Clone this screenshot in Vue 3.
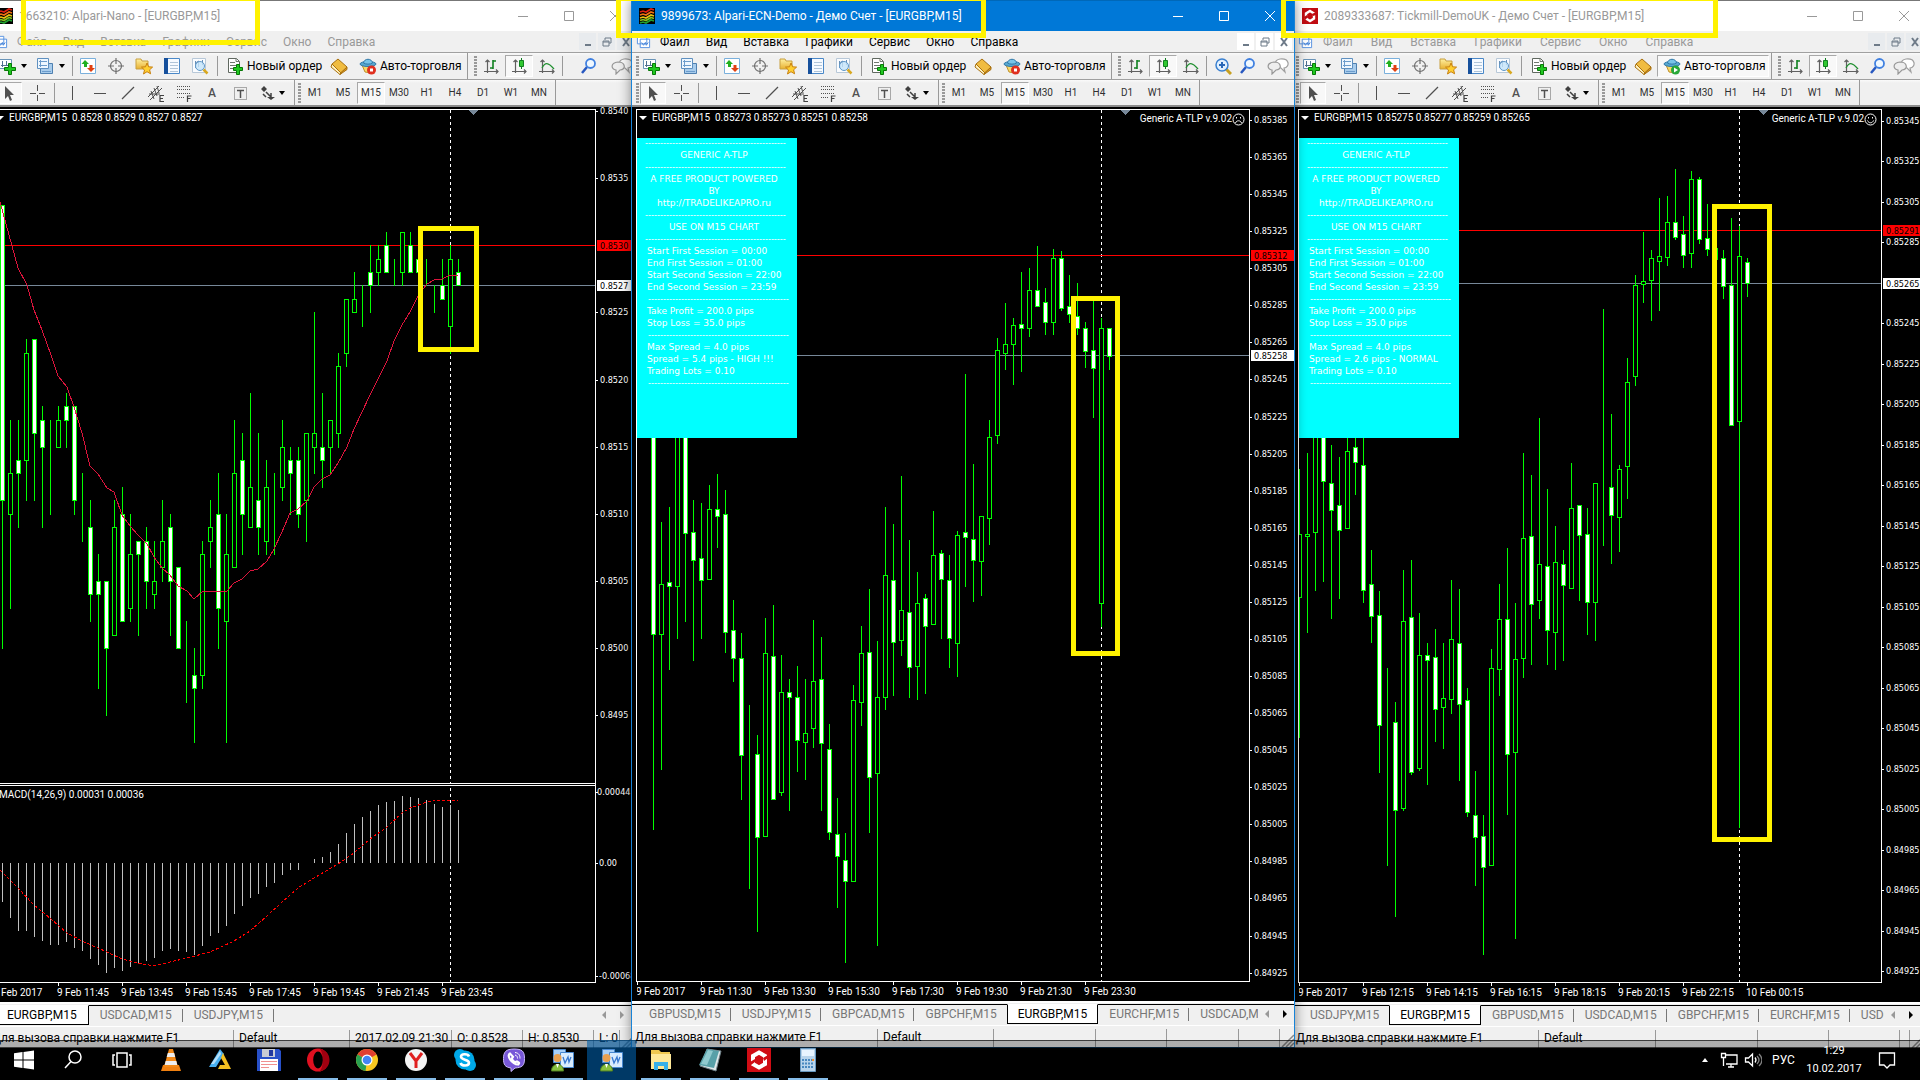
<script setup>
const dash = '-----------------------------------------------'

const panelRows = (spread) => [
  { t: dash, k: 'rule' }, { t: 'GENERIC A-TLP', k: 'mid' }, { t: dash, k: 'rule' },
  { t: 'A FREE PRODUCT POWERED', k: 'mid' }, { t: 'BY', k: 'mid' }, { t: 'http://TRADELIKEAPRO.ru', k: 'mid' },
  { t: dash, k: 'rule' }, { t: 'USE ON M15 CHART', k: 'mid' }, { t: dash, k: 'rule' },
  { t: 'Start First Session = 00:00' }, { t: 'End First Session = 01:00' },
  { t: 'Start Second Session = 22:00' }, { t: 'End Second Session = 23:59' }, { t: dash, k: 'rule in' },
  { t: 'Take Profit = 200.0 pips' }, { t: 'Stop Loss = 35.0 pips' }, { t: dash, k: 'rule in' },
  { t: 'Max Spread = 4.0 pips' }, { t: spread }, { t: 'Trading Lots = 0.10' }, { t: dash, k: 'rule in' },
]

const steps = (first, count, step, y, dy, digits) =>
  Array.from({ length: count }, (_, i) => ({ t: (first - i * step).toFixed(digits), y: Math.round(y + i * dy), x: 4 }))

// candle: [high, body top, body bottom, low, falling]
const nano = [
  [33,33,11,0,1],[17,13,10,3,0],[17,14,13,9,1],[23,22,14,11,0],[23,23,16,11,1],[18,17,15,9,1],[17,14,14,10,0],[18,17,15,15,0],
  [19,18,17,15,1],[18,18,11,10,1],[13,10,10,8,0],[11,9,4,2,1],[7,5,4,-3,1],[5,5,0,-5,1],[11,9,1,1,0],[12,10,2,2,1],
  [10,7,3,2,0],[8,8,7,1,1],[9,8,5,3,1],[8,5,4,3,0],[11,8,6,5,0],[10,9,5,1,1],[6,6,0,0,1],[2,-1,-1,-4,0],
  [0,-2,-3,-7,1],[8,7,-2,-3,0],[11,9,8,6,0],[13,10,3,0,1],[10,7,2,-7,0],[17,13,6,6,0],[16,14,10,7,1],[19,12,9,9,0],
  [16,11,9,7,1],[14,12,8,7,0],[13,11,11,7,0],[17,15,12,11,0],[15,14,13,10,1],[15,14,10,9,1],[16,16,11,8,0],[25,16,15,13,0],
  [19,15,14,12,1],[17,17,15,13,0],[22,21,16,15,0],[26,26,22,21,0],[28,26,25,25,0],[27,27,27,24,0],[30,28,27,25,1],[30,29,28,27,0],
  [31,30,28,28,1],[29,27,27,27,0],[31,31,28,27,0],[31,30,28,28,1],[29,29,28,28,1],[29,27,27,27,0],[27,26,26,25,0],[29,27,26,26,1],
  [30,29,24,22,0],[29,28,27,27,1],
]
const ecn = [
  [380,400,822,1219,1],[595,720,822,1098,0],[564,716,724,893,1],[380,400,724,830,0],[380,400,618,796,1],[550,614,671,876,1],
  [556,667,712,830,1],[519,569,710,710,0],[497,569,583,646,1],[529,579,818,860,1],[753,814,871,919,1],[821,871,1070,1158,1],
  [967,1074,1074,1340,0],[1028,1068,1237,1427,1],[790,861,1233,1233,0],[764,867,1158,1158,1],[865,940,1145,1150,0],[914,940,950,1181,1],
  [888,950,1038,1102,1],[914,1024,1042,1118,0],[794,919,1015,1052,0],[829,914,1045,1181,1],[1006,1056,1225,1241,1],[1157,1229,1274,1379,1],
  [1228,1282,1325,1491,1],[927,958,1325,1325,0],[806,861,962,1007,0],[731,860,1113,1225,1],[837,950,1105,1456,0],[564,702,950,976,0],
  [599,712,838,946,1],[501,773,834,866,0],[631,777,889,950,1],[696,759,887,954,0],[741,750,807,942,1],[572,662,803,803,0],
  [652,658,710,830,1],[662,712,830,890,1],[613,622,840,909,0],[293,614,626,724,1],[477,630,671,755,1],[583,583,675,743,0],
  [387,422,587,640,0],[220,244,418,433,0],[149,233,251,283,0],[179,194,233,313,0],[85,192,199,287,1],[77,123,199,215,0],
  [33,123,154,154,1],[118,146,188,212,1],[39,56,188,211,0],[43,56,158,162,1],[92,154,172,188,1],[107,176,199,211,1],
  [187,199,247,279,1],[144,245,282,380,1],[180,199,759,807,0],[199,199,256,283,1],
]
const tick = [
  [1107,1303,1492,1910,0],[1058,1303,1309,1595,0],[1000,1000,1297,1470,0],[1000,1000,1144,1443,1],[1035,1150,1231,1554,1],[1070,1216,1291,1494,1],
  [1000,1053,1285,1285,0],[1000,1041,1085,1182,1],[1000,1095,1470,1505,1],[1350,1452,1548,1625,1],[1473,1546,1874,2015,1],[1704,1879,1879,2295,0],
  [1806,1866,2129,2448,1],[1410,1564,2123,2129,0],[1380,1552,2015,2021,1],[1539,1665,2003,2009,0],[1629,1665,1679,2051,1],[1587,1671,1826,1922,1],
  [1629,1794,1820,1944,0],[1440,1617,1796,1838,0],[1467,1629,1813,2039,1],[1764,1800,2135,2147,1],[2013,2145,2210,2354,1],[2145,2208,2300,2562,1],
  [1647,1704,2294,2294,0],[1452,1557,1706,1784,0],[1344,1557,1961,2141,1],[1509,1677,1955,2514,0],[1059,1315,1673,1731,0],[1125,1309,1511,1691,1],
  [954,1392,1499,1554,0],[1167,1398,1589,1691,1],[1278,1386,1595,1707,0],[1350,1392,1454,1679,1],[1089,1224,1463,1463,0],[1216,1216,1304,1500,1],
  [1224,1303,1505,1601,1],[1150,1150,1505,1619,0],[627,1157,1157,1334,0],[942,1161,1244,1388,1],[1095,1108,1250,1352,0],[774,847,1097,1194,0],
  [525,555,829,854,0],[396,543,551,606,0],[450,474,540,660,0],[294,468,482,630,0],[288,366,470,494,0],[207,366,410,416,1],
  [348,402,464,500,1],[213,237,458,500,0],[231,237,416,428,1],[312,414,446,464,1],[444,444,476,476,1],[450,474,558,594,1],
  [354,555,974,974,1],[378,468,962,2180,0],[474,486,550,588,1],
]
const candles = (data, x0, origin, unit) => data.map(([h, t, b, l, f], i) => {
  const y = (v) => Math.round(origin + v * unit)
  return { x: x0 + 8 * i, h: y(h), t: y(t), b: y(b), l: y(l), f }
})
const wicks = (list) => list.map((c) => `M${c.x + 0.5} ${c.h}V${c.l + 1}`).join('')

const macd = [39,55,68,68,74,78,82,82,79,85,88,96,102,110,105,108,104,100,98,95,88,86,88,89,92,83,73,70,63,51,43,35,31,24,20,12,7,7,0,-4,-6,-11,-19,-30,-39,-46,-52,-58,-61,-62,-67,-66,-65,-63,-59,-56,-58,-53]
const macdPath = macd.map((v, i) => `M${2.5 + 8 * i} 863V${863 + v}`).join('')
const average = '0,202 18,268 27,285 34,310 42,330 51,355 58,376 67,387 74,407 82,433 90,466 98,474 107,488 114,492 122,515 130,526 138,535 147,544 154,557 162,568 170,575 178,586 187,591 194,599 202,592 227,591 234,583 242,579 250,571 258,569 267,561 274,549 282,532 290,513 298,509 307,501 314,487 322,479 330,475 338,463 347,447 354,429 370,395 387,361 394,341 402,325 410,312 418,296 427,284 434,280 442,279 450,275 458,275'
const signal = '0,870 18,888 34,905 51,919 67,933 82,941 107,952 122,959 138,963 154,966 170,962 187,958 210,952 234,941 250,931 267,916 282,902 298,888 314,878 338,864 354,853 370,839 387,827 402,813 410,808 427,802 434,800 450,800 458,801'

const times = (x, list) => list.map((t, i) => ({ x: x + 64 * i, t }))

const windows = [
  {
    id: 'nano', logo: 'logo-alpari', title: '1663210: Alpari-Nano - [EURGBP,M15]', zoom: false, auto: false,
    quote: 'EURGBP,M15  0.8528 0.8529 0.8527 0.8527', left: 0, cursor: 450, marker: 473, red: 245, grey: 285,
    candles: candles(nano, 2, 648, -13.43), box: [420, 228, 56, 121],
    prices: steps(0.854, 10, 0.0005, 111, 67.15, 4).filter((p) => p.t !== '0.8530').concat([{ t: '0.00044', y: 792, x: 1 }, { t: '0.00', y: 863, x: 3 }, { t: '-0.00068', y: 976, x: 3 }]),
    tags: ['0.8530', '0.8527'], times: times(-6, ['9 Feb 2017', '9 Feb 11:45', '9 Feb 13:45', '9 Feb 15:45', '9 Feb 17:45', '9 Feb 19:45', '9 Feb 21:45', '9 Feb 23:45']),
    tabs: ['EURGBP,M15', 'USDCAD,M15', 'USDJPY,M15'], active: 0,
    status: ['Default', '2017.02.09 21:30', 'O: 0.8528', 'H: 0.8530', 'L: 0'],
  },
  {
    id: 'ecn', logo: 'logo-alpari', title: '9899673: Alpari-ECN-Demo - Демо Счет - [EURGBP,M15]', zoom: true, auto: false,
    quote: 'EURGBP,M15  0.85273 0.85273 0.85251 0.85258', left: 637, cursor: 1101, marker: 1125, red: 255, grey: 355,
    candles: candles(ecn, 653, 230, 0.4911), box: [1073, 298, 44, 355],
    prices: steps(0.85385, 24, 0.0002, 120, 37.07, 5), tags: ['0.85312', '0.85258'],
    times: times(637, ['9 Feb 2017', '9 Feb 11:30', '9 Feb 13:30', '9 Feb 15:30', '9 Feb 17:30', '9 Feb 19:30', '9 Feb 21:30', '9 Feb 23:30']),
    panel: panelRows('Spread = 5.4 pips - HIGH !!!'), smile: false,
    tabs: ['GBPUSD,M15', 'USDJPY,M15', 'GBPCAD,M15', 'GBPCHF,M15', 'EURGBP,M15', 'EURCHF,M15', 'USDCAD,M15'], active: 4,
    status: ['Default', '', '', '', ''],
  },
  {
    id: 'tick', logo: 'logo-tick', title: '2089333687: Tickmill-DemoUK - Демо Счет - [EURGBP,M15]', zoom: false, auto: true,
    quote: 'EURGBP,M15  0.85275 0.85277 0.85259 0.85265', left: 1299, cursor: 1739, marker: 1763, red: 230, grey: 283,
    candles: candles(tick, 1299, 100, 1 / 3), box: [1714, 206, 55, 633],
    prices: steps(0.85345, 22, 0.0002, 121, 40.48, 5).filter((p) => p.t !== '0.85265'), tags: ['0.85291', '0.85265'],
    times: times(1299, ['9 Feb 2017', '9 Feb 12:15', '9 Feb 14:15', '9 Feb 16:15', '9 Feb 18:15', '9 Feb 20:15', '9 Feb 22:15', '10 Feb 00:15']),
    panel: panelRows('Spread = 2.6 pips - NORMAL'), smile: true,
    tabs: ['USDJPY,M15', 'EURGBP,M15', 'GBPUSD,M15', 'USDCAD,M15', 'GBPCHF,M15', 'EURCHF,M15', 'USDCHF,M15'], active: 1,
    status: ['Default', '', '', '', ''],
  },
]

const menu = ['Файл', 'Вид', 'Вставка', 'Графики', 'Сервис', 'Окно', 'Справка']
const views = ['market', 'navigator', 'star', 'data', 'tester']
const tools = ['vline', 'hline', 'trend', 'channel', 'fibo', 'text', 'label']
const frames = ['M1', 'M5', 'M15', 'M30', 'H1', 'H4', 'D1', 'W1', 'MN']
const tasks = [
  ['start'], ['search'], ['views'], ['vlc'], ['aimp'], ['save'], ['opera', 1], ['chrome', 1], ['yandex', 1], ['skype', 1],
  ['viber', 1], ['terminal', 1], ['terminal', 1, 1], ['folder', 1], ['notepad', 1], ['tickmill', 1], ['calc', 1],
]
</script>

<template>
  <div class="screen">
    <svg class="defs" aria-hidden="true">
      <defs>
        <linearGradient id="g-folder" x1="0" y1="0" x2="0" y2="1"><stop offset="0" stop-color="#fff0a0" /><stop offset="1" stop-color="#e8b030" /></linearGradient>
        <symbol id="logo-alpari" viewBox="0 0 16 16"><path fill="#000" d="M0 0h16v16H0z" /><g fill="none" stroke-width="1.6"><path stroke="#e02010" d="M1 4l3-1 3 1 5-3 3 1" /><path stroke="#f07010" d="M1 7l3-1 3 1 5-3 3 1" /><path stroke="#e8c010" d="M1 10l3-1 3 1 5-3 3 1" /><path stroke="#80c020" d="M1 12.500l3-1 3 1 5-3 3 1" /><path stroke="#20a030" d="M1 15l3-1 3 1 5-3 3 1" /></g></symbol>
        <symbol id="logo-tick" viewBox="0 0 16 16"><path fill="#c00c12" d="M0 0h16v16H0z" /><path fill="none" stroke="#fff" stroke-width="2.400" d="M8 3l4 2.500v5L8 13l-4-2.500v-5z" /><path fill="#c00c12" d="M2 9l3-2 1 2-3 3zM10 6l4-2v3l-3 1z" /></symbol>
        <symbol id="mdi" viewBox="0 0 16 16"><path fill="#fff" stroke="#5590e0" d="M1.500 2.500h10v8h-10zM4.500 5.500h10v9h-10z" /><path fill="none" stroke="#4080d8" d="M6 9l2 3 2-3 1 3 2-3" /></symbol>
        <symbol id="new" viewBox="0 0 18 18"><path fill="#fff" stroke="#6a94b8" d="M1.500 2.500h12v9h-12z" /><path fill="none" stroke="#507090" d="M4.500 4v6M3 8.500h7M8.500 4v4" /><path fill="#20c820" stroke="#067806" d="M10.500 6.500h3v4h4v3h-4v4h-3v-4h-4v-3h4z" /></symbol>
        <symbol id="profiles" viewBox="0 0 18 18"><path fill="#a8ccec" stroke="#4f80b0" d="M4.500 6.500h12v10h-12z" /><path fill="#eef7ff" stroke="#5f90c0" d="M1.500 1.500h11v10h-11z" /><path fill="none" stroke="#6c9ccc" d="M3 4.500h8M3 8.500h8M4.500 3v7M6 14.500h9" /></symbol>
        <symbol id="market" viewBox="0 0 18 18"><path fill="#fff" stroke="#7ab0dc" d="M1.500 1.500h15v15h-15z" /><path fill="#20b020" d="M6 3l4 4H8v3H5V7H2.500z" /><path fill="#e04010" d="M12 15l-4-4h2.500V8h3v3H16z" /></symbol>
        <symbol id="navigator" viewBox="0 0 18 18"><g fill="none" stroke="#707070" stroke-width="1.200"><circle cx="9" cy="9" r="5.500" /><path d="M9 1v6M9 11v6M1 9h6M11 9h6" /></g></symbol>
        <symbol id="star" viewBox="0 0 18 18"><path fill="url(#g-folder)" stroke="#c8a040" d="M1 2h5l1 2h6v8H1z" /><path fill="#ffcf30" stroke="#c88010" d="M12 6l1.600 3.800 4 .3-3 2.700 1 4-3.600-2.100L8.500 17l1-4-3-2.900 4-.3z" /></symbol>
        <symbol id="data" viewBox="0 0 18 18"><path fill="#f6faff" stroke="#4a88c8" d="M1.500 1.500h15v15h-15z" /><path fill="#16509c" d="M1 1h4v16H1z" /><path fill="none" stroke="#b0c4d8" d="M7 5.500h8M7 8.500h8M7 11.500h8M7 14.500h8" /></symbol>
        <symbol id="tester" viewBox="0 0 18 18"><path fill="#fafcff" stroke="#b8c8d8" d="M1.500 1.500h13v14h-13z" /><path fill="none" stroke="#6890b8" d="M4.500 4v7M4.500 6l3-2v6M11.500 3v5" /><circle cx="9" cy="9" r="4.500" fill="#c4e4fa" fill-opacity=".8" stroke="#6098c8" /><path stroke="#d8a820" stroke-width="2.500" d="M12.500 12.500l4 4" /></symbol>
        <symbol id="order" viewBox="0 0 18 18"><path fill="#fff" stroke="#606860" d="M2.500 1.500h8l3 3v11h-11z" /><path fill="none" stroke="#707870" d="M4 5.500h5M4 8.500h6M4 11.500h4M10 1.500v3h3" /><path fill="#20c820" stroke="#067806" d="M10.500 7.500h3v3h3v3h-3v4h-3v-4h-3v-3h3z" /></symbol>
        <symbol id="gold" viewBox="0 0 18 18"><path fill="#f0bc40" stroke="#a87010" d="M8 2l9 8-6 6-9-9z" /><path fill="#fff2c0" stroke="#a87010" d="M2 7l-1 3 9 7.500 1-1.500z" /><path fill="#d89820" stroke="#a87010" d="M17 10v2.500L10 17.500l1-2z" /></symbol>
        <symbol id="auto" viewBox="0 0 18 18"><path fill="#f8d868" stroke="#c09028" d="M3 8h12l-3 8-6-1z" /><ellipse cx="9" cy="7" rx="8" ry="2.500" fill="#58a8d0" stroke="#3078a8" /><path fill="#78c4e8" stroke="#3078a8" d="M4.500 6C5 1 13 1 13.500 6c-2 1.500-7 1.500-9 0z" /></symbol>
        <symbol id="bars" viewBox="0 0 18 18"><path fill="none" stroke="#606060" stroke-width="1.200" d="M5.500 3v13M2 14.500h14M3.500 5l2-2 2 2M14 12.500l2 2-2 2" /><path fill="none" stroke="#108020" stroke-width="1.600" d="M11 3v9M8 11h3M11 4h3" /></symbol>
        <symbol id="candle" viewBox="0 0 18 18"><path fill="none" stroke="#606060" stroke-width="1.200" d="M5.500 3v13M2 14.500h14M3.500 5l2-2 2 2M14 12.500l2 2-2 2" /><path stroke="#108020" d="M11.500 1v11" /><path fill="#30c830" stroke="#108020" d="M9.500 3.500h4v6h-4z" /></symbol>
        <symbol id="curve" viewBox="0 0 18 18"><path fill="none" stroke="#606060" stroke-width="1.200" d="M4.500 3v13M1 14.500h15M2.500 5l2-2 2 2M14 12.500l2 2-2 2" /><path fill="none" stroke="#209030" stroke-width="1.300" d="M4 11c3-6 6-6 12 1" /></symbol>
        <symbol id="zoomin" viewBox="0 0 18 18"><path stroke="#c8a020" stroke-width="3" d="M12 12l5 5" /><circle cx="8" cy="8" r="6" fill="#e0f0ff" stroke="#3a80d0" stroke-width="1.500" /><path stroke="#2868b8" stroke-width="2" d="M8 5v6M5 8h6" /></symbol>
        <symbol id="find" viewBox="0 0 18 18"><path stroke="#2858c0" stroke-width="2.500" d="M2 16l5-6" /><circle cx="10.500" cy="6.500" r="4.500" fill="#f0f8ff" stroke="#4080e0" stroke-width="1.800" /></symbol>
        <symbol id="chat" viewBox="0 0 22 18"><path fill="#fff" stroke="#a0a0a0" stroke-width="1.200" d="M13 2c10-1 10 8 4 9l1 4-4-4c-6-1-8-8-1-9z" /><path fill="#eee" stroke="#989898" stroke-width="1.200" d="M7 5c8 0 8 8 2 8l-4 4V13C0 12-1 6 7 5z" /></symbol>
        <symbol id="pointer" viewBox="0 0 18 18"><path fill="#505050" d="M5 2v13l3-3 2 5 2-1-2-5h4z" /></symbol>
        <symbol id="cross" viewBox="0 0 18 18"><path stroke="#505050" d="M9.500 1v6M9.500 11v6M2 9.500h6M11 9.500h6" /></symbol>
        <symbol id="vline" viewBox="0 0 18 18"><path stroke="#505050" d="M9.500 2v14" /></symbol>
        <symbol id="hline" viewBox="0 0 18 18"><path stroke="#505050" d="M3 9.500h12" /></symbol>
        <symbol id="trend" viewBox="0 0 18 18"><path stroke="#505050" stroke-width="1.200" d="M3 15L15 3" /></symbol>
        <symbol id="channel" viewBox="0 0 18 18"><path fill="none" stroke="#505050" d="M1 13L12 2M3 16L15 4M4 7l3 8M7 4l3 8M10 2l2 7M2 10h11" /><path fill="none" stroke="#404040" stroke-width="1.200" d="M17 11.500h-4v6h4M13 14.500h3" /></symbol>
        <symbol id="fibo" viewBox="0 0 18 18"><path stroke="#505050" stroke-dasharray="1 1" d="M2 2.500h13M2 5.500h13M2 9.500h13M2 13.500h8" /><path fill="none" stroke="#404040" stroke-width="1.200" d="M12.500 18v-6h4M12.500 14.500h3" /></symbol>
        <symbol id="label" viewBox="0 0 18 18"><path fill="none" stroke="#606060" stroke-dasharray="1 1" d="M3.500 3.500h12v12h-12z" /><path fill="none" stroke="#505050" stroke-width="1.500" d="M6 6.500h7M9.500 6v8" /></symbol>
        <symbol id="shapes" viewBox="0 0 18 18"><path fill="#404040" d="M5 2l3 3-3 3-3-3zM12 16l-4-3h8z" /><path stroke="#404040" stroke-width="1.500" d="M7 8l5 5M4 10l3 3M12 9v4" /></symbol>

        <symbol id="t-start" viewBox="0 0 24 24"><path fill="#fff" d="M2 5.300l8.500-1.200v7.400H2zM11.500 4L22 2.500v9H11.500zM2 12.500h8.500v7.400L2 18.700zM11.500 12.500H22v9L11.500 20z" /></symbol>
        <symbol id="t-search" viewBox="0 0 24 24"><g fill="none" stroke="#fff" stroke-width="1.500"><circle cx="14" cy="9" r="6" /><path d="M10 13.500L4 20" /></g></symbol>
        <symbol id="t-views" viewBox="0 0 24 24"><path fill="none" stroke="#fff" stroke-width="1.500" d="M7 5h10v14H7zM5 7H3v10h2M19 7h2v10h-2" /></symbol>
        <symbol id="t-vlc" viewBox="0 0 24 24"><path fill="#f08010" d="M4 17h16l2 6H2z" /><path fill="#f48a18" d="M10 1h4l5 18H5z" /><path fill="#eee" d="M8.800 5h6.400l1 4H7.700zM6.700 13h10.600l1 4H5.600z" /></symbol>
        <symbol id="t-aimp" viewBox="0 0 24 24"><path fill="#48b0f0" d="M12 1l4 5-8 13H1z" /><path fill="#f4c020" d="M15 5l8 16H10l2-4h5l-4-7z" /><path fill="#fff" d="M12 3l1 3-7 10H3z" opacity=".6" /></symbol>
        <symbol id="t-save" viewBox="0 0 24 24"><path fill="#2850c8" d="M0 1h22l2 2v20H0z" /><path fill="#c8ccd4" d="M5 1h13v8H5z" /><path fill="#2038a0" d="M12 2h4v6h-4z" /><path fill="#fff" d="M3 11h18v12H3z" /><path stroke="#f09090" d="M4 13.500h16M4 16.500h16M4 19.500h8" /></symbol>
        <symbol id="t-opera" viewBox="0 0 24 24"><ellipse cx="12" cy="12" rx="11" ry="11.500" fill="#e01020" /><path fill="#a00010" d="M13 0.500c14 2 14 21 0 23 5-2 5-21 0-23z" /><ellipse cx="12" cy="12" rx="4.800" ry="8.500" /></symbol>
        <symbol id="t-chrome" viewBox="0 0 24 24"><circle cx="12" cy="12" r="11" fill="#f8c820" /><path fill="#e04030" d="M12 12L2.500 6.500a11 11 0 0119 0z" /><path fill="#28a050" d="M12 12L2.500 6.500a11 11 0 008 16.400z" /><circle cx="12" cy="12" r="5.500" fill="#fff" /><circle cx="12" cy="12" r="4.300" fill="#4285f4" /></symbol>
        <symbol id="t-yandex" viewBox="0 0 24 24"><circle cx="12" cy="12" r="11" fill="#f4f4f4" /><path fill="none" stroke="#e02020" stroke-width="3" d="M6 5l6 8 6-8M12 12v8" /></symbol>
        <symbol id="t-skype" viewBox="0 0 24 24"><circle cx="12" cy="12" r="9.500" fill="#00a8e8" /><circle cx="7" cy="7" r="6" fill="#00a8e8" /><circle cx="17" cy="17" r="6" fill="#00a8e8" /><path fill="none" stroke="#fff" stroke-width="2.600" d="M16 8.500c-1-3-8-3-8 .3 0 3.500 8 2.200 8 6 0 3.700-7.500 3.500-8.500.2" /></symbol>
        <symbol id="t-viber" viewBox="0 0 24 24"><path fill="#7858d8" stroke="#c8b8f8" d="M12 1c8 0 10.500 2 10.500 9.500S20 19.500 13 20l-4 3.500V20C3 19 1.500 17 1.500 10.500S4 1 12 1z" /><path fill="none" stroke="#fff" stroke-width="2.200" d="M8 5.500c-4 2 2 10.500 8 11 2-1.500 1-2-1-3l-2 .8c-2-1-3-3-3-4l1-1.500z" /><path fill="none" stroke="#fff" d="M13 4.500c4 .5 5 3 5 6M13 7c2 .5 2.500 2 2.500 3.500" /></symbol>
        <symbol id="t-terminal" viewBox="0 0 24 24"><path fill="#a8d0f8" stroke="#4888d0" d="M2.500 1.500h12v13h-12z" /><path fill="#d8ecff" stroke="#4888d0" d="M9.500 4.500h13v15h-13z" /><path fill="none" stroke="#3878d0" stroke-width="1.300" d="M12 9l2 6 3-6 1 5 2-5" /><circle cx="6.500" cy="10" r="4" fill="#e8a050" /><path fill="#88c040" stroke="#508020" d="M.500 23c0-9 12-9 12 0z" /><path fill="#fff" d="M5 16h3l-1.500 4z" /></symbol>
        <symbol id="t-folder" viewBox="0 0 24 24"><path fill="#f0c850" d="M2 2h8l2 2h9v17H2z" /><path fill="#ffe898" d="M2 6h20v15H2z" /><path fill="#38b0e8" d="M5 22v-8h14v8h-4v-4H9v4z" /></symbol>
        <symbol id="t-notepad" viewBox="0 0 24 24"><path fill="#dfe8ea" stroke="#708088" d="M9 1l14 2-5 20L2 18z" /><path fill="#58a0a8" d="M9 1l12 2-5 17L1 17z" /><path fill="#a8dce0" d="M10 2l5 1-6 14-6-1z" opacity=".7" /></symbol>
        <symbol id="t-tickmill" viewBox="0 0 24 24"><path fill="#d00c14" d="M0 0h24v24H0z" /><path fill="none" stroke="#fff" stroke-width="4" d="M12 4.500l6 3.500v8l-6 3.500L6 16V8z" /><path fill="#d00c14" d="M3 14l5-3v3l-4 3zM16 10l5-3v3l-4 3z" /></symbol>
        <symbol id="t-calc" viewBox="0 0 24 24"><path fill="#b8d4ec" stroke="#6898c0" d="M4.500.500h15v23h-15z" /><path fill="#e8f4ff" d="M6 2h12v6H6z" /><path stroke="#4888c0" stroke-width="2" stroke-dasharray="2 1" d="M6 12h12M6 15.500h12M6 19h12" /><path stroke="#f09030" stroke-width="2" d="M16 12h2" /></symbol>
      </defs>
    </svg>

    <main class="desktop">
      <section v-for="w in windows" :key="w.id" class="window" :class="w.id">
        <header class="titlebar">
          <svg class="logo"><use :href="'#' + w.logo" /></svg>
          <h1>{{ w.title }}</h1>
          <button class="ctl" aria-label="Свернуть"><svg viewBox="0 0 12 12"><path d="M1 6.500h10" /></svg></button>
          <button class="ctl" aria-label="Развернуть"><svg viewBox="0 0 12 12"><path d="M1.500 1.500h9v9h-9z" /></svg></button>
          <button class="ctl" aria-label="Закрыть"><svg viewBox="0 0 12 12"><path d="M1 1l10 10M11 1L1 11" /></svg></button>
        </header>

        <nav class="menubar">
          <svg class="mdi"><use href="#mdi" /></svg>
          <button v-for="m in menu" :key="m" class="menu">{{ m }}</button>
          <span class="fill"></span>
          <button class="child" aria-label="Свернуть график"><svg viewBox="0 0 10 10"><path d="M2 8h6" /></svg></button>
          <button class="child" aria-label="Восстановить график"><svg viewBox="0 0 10 10"><path class="thin" d="M3 3V1h6v5H7M1 4h6v5H1zM1 5h6" /></svg></button>
          <button class="child" aria-label="Закрыть график"><svg viewBox="0 0 10 10"><path d="M2 1l6 8M8 1L2 9" /></svg></button>
        </nav>

        <div class="toolbar main">
          <i class="handle"></i>
          <button class="tool drop" aria-label="Новый график"><svg><use href="#new" /></svg><i class="caret"></i></button>
          <button class="tool drop" aria-label="Профили"><svg><use href="#profiles" /></svg><i class="caret"></i></button>
          <i class="sep tight"></i>
          <button v-for="v in views" :key="v" class="tool" :aria-label="v"><svg><use :href="'#' + v" /></svg></button>
          <i class="sep"></i>
          <button class="tool wide order"><svg><use href="#order" /></svg>Новый ордер</button>
          <button class="tool" aria-label="MetaEditor"><svg><use href="#gold" /></svg></button>
          <button class="tool wide auto" :class="{ pressed: w.auto }">
            <svg viewBox="0 0 18 18"><use href="#auto" /><template v-if="w.auto"><circle cx="12.500" cy="13" r="4.500" fill="#28a838" /><path fill="#fff" d="M11 10.500l4 2.500-4 2.500z" /></template><template v-else><circle cx="12.500" cy="13" r="4.500" fill="#e03020" /><path fill="#fff" d="M11 11.500h3v3h-3z" /></template></svg>Авто-торговля
          </button>
          <i class="sep end"></i><i class="handle"></i>
          <button class="tool" aria-label="Бары"><svg><use href="#bars" /></svg></button>
          <button class="tool pressed" aria-label="Свечи"><svg><use href="#candle" /></svg></button>
          <button class="tool" aria-label="Линия"><svg><use href="#curve" /></svg></button>
          <i v-if="!w.auto" class="sep tight"></i>
          <button v-if="w.zoom" class="tool near" aria-label="Увеличить"><svg><use href="#zoomin" /></svg></button>
          <button class="tool find" aria-label="Поиск"><svg><use href="#find" /></svg></button>
          <button class="tool chat" aria-label="Чат"><svg><use href="#chat" /></svg></button>
        </div>

        <div class="toolbar lines">
          <i class="handle"></i>
          <button class="tool pressed" aria-label="Курсор"><svg><use href="#pointer" /></svg></button>
          <button class="tool" aria-label="Перекрестие"><svg><use href="#cross" /></svg></button>
          <i class="sep"></i>
          <button v-for="t in tools" :key="t" class="tool" :aria-label="t"><b v-if="t === 'text'">A</b><svg v-else><use :href="'#' + t" /></svg></button>
          <button class="tool drop" aria-label="Стрелки"><svg><use href="#shapes" /></svg><i class="caret"></i></button>
          <i class="sep end"></i><i class="handle"></i>
          <button v-for="f in frames" :key="f" class="tool frame" :class="{ pressed: f === 'M15' }">{{ f }}</button>
          <i class="sep end"></i>
        </div>

        <div class="chart">
          <div class="plot">
            <svg class="canvas" shape-rendering="crispEdges">
              <g :transform="`translate(${-w.left} -110)`">
                <path class="cursor" :d="`M${w.cursor + 0.5} 110V982`" />
                <path stroke="#778899" :d="`M0 ${w.grey + 0.5}H1920`" />
                <path stroke="#f00" :d="`M0 ${w.red + 0.5}H1920`" />
                <path stroke="#0f0" :d="wicks(w.candles)" />
                <rect v-for="(c, i) in w.candles" :key="i" :x="c.x - 1.5" :y="c.t + 0.5" width="4" :height="c.b - c.t" :fill="c.f ? '#fff' : '#000'" stroke="#0f0" />
                <path fill="#778899" :d="`M${w.marker - 4} 110h9l-4.500 5z`" />
                <template v-if="w.id === 'nano'">
                  <polyline class="average" :points="average" />
                  <path stroke="#c0c0c0" :d="macdPath" />
                  <polyline class="signal" :points="signal" />
                  <path fill="#000" stroke="#fff" d="M-5 783.500H1920V785.500H-5z" />
                </template>
                <rect class="mark" :x="w.box[0] + 0.5" :y="w.box[1] + 0.5" :width="w.box[2]" :height="w.box[3]" />
              </g>
            </svg>
            <p class="quote"><i class="caret"></i>{{ w.quote }}</p>
            <p v-if="w.id === 'nano'" class="macd">MACD(14,26,9) 0.00031 0.00036</p>
            <p v-if="w.panel" class="expert">Generic A-TLP v.9.02<svg viewBox="0 0 13 13"><circle cx="6.500" cy="6.500" r="5.500" /><path :d="w.smile ? 'M3.500 7.500c1 3 5 3 6 0M4.500 4v1.500M8.500 4v1.500' : 'M3.500 10c1-3 5-3 6 0M4.500 4v1.500M8.500 4v1.500'" /></svg></p>
            <div v-if="w.panel" class="panel"><p v-for="(r, i) in w.panel" :key="i" :class="r.k">{{ r.t }}</p></div>
          </div>
          <svg class="canvas scale">
            <g transform="translate(0 -110)">
              <g v-for="p in w.prices" :key="p.t"><path stroke="#fff" shape-rendering="crispEdges" :d="`M0 ${p.y + 0.5}h2`" /><text :x="p.x" :y="p.y + 3">{{ p.t }}</text></g>
              <rect x="1" :y="w.red - 5" width="60" height="11" fill="#f00" /><text x="4" :y="w.red + 4" class="dark">{{ w.tags[0] }}</text>
              <rect x="1" :y="w.grey - 5" width="60" height="11" fill="#fff" /><text x="4" :y="w.grey + 4" class="dark">{{ w.tags[1] }}</text>
            </g>
          </svg>
          <svg class="canvas dates">
            <g :transform="`translate(${-w.left} 0)`">
              <g v-for="t in w.times" :key="t.t"><path stroke="#fff" shape-rendering="crispEdges" :d="`M${t.x + 0.5} 0v3`" /><text :x="t.x - 1" y="13">{{ t.t }}</text></g>
            </g>
          </svg>
        </div>

        <div class="tabs">
          <div class="strip">
            <button v-for="(t, i) in w.tabs" :key="t" :class="{ on: i === w.active, open: i !== w.active - 1 }">{{ t }}</button>
          </div>
          <button class="scroll left" aria-label="Назад"><i></i></button>
          <button class="scroll right" aria-label="Вперёд"><i></i></button>
        </div>

        <footer class="status">
          <span class="help">Для вызова справки нажмите F1</span>
          <span v-for="(s, i) in w.status" :key="i" :class="'s' + i">{{ s }}</span>
          <svg class="grip" viewBox="0 0 14 14"><path d="M2 14L14 2M6 14l8-8M10 14l4-4" /></svg>
        </footer>
      </section>
    </main>

    <div class="note one"></div>
    <div class="note two"></div>
    <div class="note three"></div>

    <footer class="taskbar">
      <button v-for="(t, i) in tasks" :key="i" class="task" :class="{ run: t[1], current: t[2] }" :aria-label="t[0]"><svg><use :href="'#t-' + t[0]" /></svg></button>
      <span class="fill"></span>
      <button class="tray" aria-label="Скрытые значки"><svg viewBox="0 0 18 18"><path class="solid" d="M6 11l3-4 3 4z" /></svg></button>
      <button class="tray" aria-label="Сеть"><svg viewBox="0 0 18 18"><path d="M6 4h11v9H6M8 16h6M11 13v3M1.500 2.500h4v4h-4zM3.500 7v8" /></svg></button>
      <button class="tray" aria-label="Звук"><svg viewBox="0 0 18 18"><path d="M1.500 7h3l4-4v12l-4-4h-3zM11 6.500q2 2.500 0 5" /><path opacity=".5" d="M13 5q4 4 0 8M15 3q6 6 0 12" /></svg></button>
      <button class="lang">РУС</button>
      <button class="clock"><time>1:29</time><time>10.02.2017</time></button>
      <button class="notify" aria-label="Уведомления"><svg viewBox="0 0 18 18"><path d="M1.500 2h15v12H12l-3 3-3-3H1.500z" /></svg></button>
    </footer>
  </div>
</template>

<style>
body { background: #000; }
</style>

<style scoped>
.screen { position: relative; display: flex; flex-direction: column; height: 100vh; overflow: hidden; font: 12px/16px Roboto, "Noto Sans", sans-serif; color: #000; }
.defs { position: absolute; width: 0; height: 0; }
button { font: inherit; color: inherit; background: none; border: 0; padding: 0; margin: 0; }
p, h1 { margin: 0; }
i { display: block; flex: none; }
svg { display: block; flex: none; }
.fill { flex: 1; }

.desktop { flex: 1; min-height: 0; display: flex; }
.window { min-width: 0; display: flex; flex-direction: column; overflow: hidden; background: #f0f0f0; box-sizing: border-box; }
.nano { flex: 631 1 0; }
.ecn { flex: 662 1 0; border: 1px solid #1883d7; border-top: 0; z-index: 1; box-shadow: 0 0 12px rgba(0, 0, 0, .45); }
.tick { flex: 625 1 0; }

.titlebar { flex: none; height: 31px; box-sizing: border-box; display: flex; align-items: center; background: #fff; border-top: 1px solid #777; color: #999; padding-right: 1px; }
.titlebar h1 { flex: 1; min-width: 0; font-size: 12px; font-weight: 400; white-space: nowrap; margin-left: 6px; }
.logo { width: 16px; height: 16px; margin-left: 7px; }
.ecn .titlebar { background: #0078d7; border-color: #0068b8; color: #fff; }
.nano .logo { margin-left: -3px; }
.ctl { flex: none; width: 46px; height: 30px; }
.ctl svg { width: 12px; height: 12px; margin: 0 auto; }
.ctl path { fill: none; stroke: currentColor; stroke-width: 1; }
.nano .titlebar, .tick .titlebar { margin-right: -8px; }

.menubar { flex: none; height: 21px; display: flex; align-items: center; padding-left: 4px; }
.mdi { width: 15px; height: 15px; margin-right: 1px; }
.menu { padding: 0 8px; white-space: nowrap; }
.nano .menubar { padding-left: 0; margin-left: -7px; margin-right: -5px; color: #999; }
.tick .menubar { margin-right: -5px; padding-left: 3px; color: #999; }
.tick .menu { padding: 0 9px; }
.child { flex: none; width: 17px; height: 17px; margin-right: 2px; background: #fff; }
.child svg { width: 10px; height: 10px; margin: 0 auto; }
.child path { fill: none; stroke: #6d7a88; stroke-width: 2; }
.child .thin { stroke-width: 1; }
.nano .child, .tick .child { background: #e8ebee; }

.toolbar { flex: none; height: 26px; display: flex; align-items: center; box-sizing: border-box; border-top: 1px solid #a0a0a0; background: linear-gradient(#fafafa, #f0f0f0 3px); white-space: nowrap; }
.toolbar.main { height: 27px; }
.nano .toolbar { margin-left: -12px; }
.tick .toolbar { margin-left: -3px; }
.handle { width: 3px; height: 20px; margin-left: 4px; background: repeating-linear-gradient(#999 0 2px, #f0f0f0 2px 3px); }
.tool { flex: none; width: 28px; height: 22px; display: flex; align-items: center; justify-content: center; box-sizing: border-box; }
.tool svg { width: 18px; height: 18px; }
.drop { width: 38px; justify-content: flex-start; gap: 5px; padding-left: 3px; }
.caret { width: 0; height: 0; border: 3px solid transparent; border-top: 4px solid #000; border-bottom: 0; }
.sep { width: 7px; height: 20px; background: linear-gradient(#999, #999) center / 1px 100% no-repeat; }
.sep.tight { width: 3px; }
.sep.end { width: 5px; height: 26px; }
.end + .handle { margin-left: 1px; }
.main .end + .handle { margin-left: 4px; }
.wide { justify-content: flex-start; gap: 3px; padding-left: 5px; }
.order { width: 104px; }
.auto { width: 112px; padding-left: 6px; }
.pressed { background: #f8f8f8; border: 1px solid #a8a8a8; border-right-color: #fff; border-bottom-color: #fff; }
.auto.pressed { padding-left: 5px; }
.near { width: 25px; margin-left: 2px; }
.find { width: 26px; }
.chat { width: 34px; }
.chat svg { width: 22px; }
.nano .find { margin-left: 12px; }
.nano .chat { margin-left: 3px; }
.tick .chat { width: 26px; }
.lines .pressed:first-of-type { width: 26px; margin: 0 1px; }
.lines b { font-size: 12px; font-weight: 500; color: #505050; }
.lines .drop { padding-left: 5px; gap: 2px; }
.lines .frame { font-size: 10px; color: #303030; }

.chart { flex: 1; min-height: 0; display: grid; grid-template: 1fr 19px / 1fr 44px; background: #000; border-top: 2px solid #8c8c8c; padding: 2px 0 0 4px; }
.nano .chart { grid-template-columns: 1fr 35px; padding-left: 0; }
.tick .chart { grid-template-columns: 1fr 38px; padding-left: 3px; }
.plot { position: relative; min-width: 0; min-height: 0; border: 1px solid #fff; overflow: hidden; }
.nano .plot { border-left: 0; }
.canvas { width: 100%; height: 100%; overflow: hidden; }
.plot .canvas { position: absolute; inset: 0; }
.scale { padding-top: 1px; box-sizing: border-box; overflow: visible; }
.dates { grid-column: 1 / 3; margin-left: 1px; }
.nano .dates { margin-left: 0; }
.canvas text { font: 9px "DejaVu Sans Condensed", sans-serif; fill: #fff; }
.canvas.dates text { font: 10px Roboto, sans-serif; }
.canvas .dark { fill: #000; }
.cursor { stroke: #fff; stroke-dasharray: 3 3; }
.average { fill: none; stroke: #dc143c; }
.signal { fill: none; stroke: #f00; stroke-dasharray: 3 2; }
.mark { fill: none; stroke: #fff200; stroke-width: 5; }
.quote, .macd, .expert { position: absolute; color: #fff; font-size: 10px; line-height: 14px; white-space: pre; }
.quote { top: 1px; left: 2px; display: flex; align-items: center; gap: 5px; }
.nano .quote { left: -4px; }
.quote .caret { border-width: 4px; border-bottom-width: 0; border-top-color: #fff; }
.macd { left: -1px; top: 678px; }
.expert { top: 2px; right: 4px; display: flex; align-items: center; }
.expert svg { width: 13px; height: 13px; }
.expert circle, .expert path { fill: none; stroke: #fff; }
.panel { position: absolute; left: 0; top: 28px; width: 160px; height: 300px; box-sizing: border-box; background: #0ff; color: #fff; font: 9px/10px "DejaVu Sans", sans-serif; white-space: pre; }
.panel p { padding-left: 10px; height: 12px; }
.panel .mid { padding: 0; width: 154px; text-align: center; }
.panel .rule { padding-left: 8px; font-family: "Liberation Sans", sans-serif; }
.panel .rule.in { padding-left: 11px; }

.tabs { flex: none; height: 24px; box-sizing: border-box; border-top: 2px solid #fff; display: flex; background: linear-gradient(#f0f0f0 1px, #000 1px 2px, #f0f0f0 2px); color: #777; }
.strip { flex: 1; min-width: 0; display: flex; overflow: hidden; padding-top: 1px; }
.ecn .strip { padding-left: 6px; }
.tick .strip { padding-left: 4px; }
.strip button { position: relative; flex: none; height: 20px; padding: 0 10px 0 11px; white-space: nowrap; box-sizing: border-box; }
.strip .open::after { content: ""; position: absolute; right: 0; top: 4px; height: 13px; border-right: 1px solid #777; }
.strip .on { background: #fff; color: #000; border: 1px solid #000; border-top-color: #fff; padding: 0 10px; }
.strip .on::after { display: none; }
.nano .on { margin-left: -5px; }
.nano .strip button { padding: 0 11px; }
.scroll { flex: none; width: 18px; }
.scroll i { width: 0; height: 0; margin: 0 auto; border: 4px solid transparent; }
.scroll.left i { border-right-color: #999; border-left: 0; }
.scroll.right i { border-left-color: #000; border-right: 0; }
.nano .scroll.right i { border-left-color: #999; }

.status { flex: none; height: 22px; box-sizing: border-box; border-top: 1px solid #fff; display: flex; padding-top: 3px; white-space: nowrap; }
.status span { flex: none; height: 18px; box-sizing: border-box; padding-left: 5px; border-left: 1px solid #999; overflow: hidden; }
.status .help { width: 245px; padding-left: 3px; border: 0; }
.status .s0 { width: 116px; }
.status .s1 { width: 102px; }
.status .s2, .status .s3 { width: 71px; }
.status .s4 { width: 27px; border-right: 1px solid #999; }
.ecn .status .s3 { width: 72px; }
.ecn .status .s4 { width: 42px; }
.nano .status .help { width: 241px; margin-left: -8px; padding-left: 0; }
.tick .status .help { width: 243px; padding-left: 1px; }
.tick .status .s4 { width: 11px; }
.tick .status .s0 { width: 117px; }
.grip { width: 14px; height: 14px; margin: 4px 0 0 auto; }
.grip path { stroke: #888; stroke-width: 1.500; }

.note { position: absolute; z-index: 3; box-sizing: border-box; border: 5px solid #fff200; pointer-events: none; top: -4px; height: 42px; }
.one { left: 21px; width: 239px; height: 49px; }
.two { left: 616px; width: 370px; }
.three { left: 1281px; width: 437px; }

.taskbar { position: relative; z-index: 2; flex: none; height: 40px; margin-top: -8px; display: flex; align-items: center; color: #fff; background: linear-gradient(rgba(0, 0, 0, .75) 0 1px, rgba(0, 0, 0, .28) 1px 7px, rgba(0, 0, 0, .75) 7px 8px, #000 8px); }
.task { flex: none; width: 49px; height: 40px; box-sizing: border-box; }
.task:first-child { margin-left: -1px; }
.task svg { width: 24px; height: 24px; margin: 0 auto; }
.run { background: linear-gradient(#86bce8, #86bce8) center bottom / 40px 2px no-repeat; }
.run.current { background: linear-gradient(rgba(0, 95, 170, .6), rgba(0, 95, 170, .6)); }
.tray svg, .notify svg { width: 18px; height: 18px; }
.tray svg { margin: 0 auto; }
.tray { flex: none; width: 24px; }
.tray path, .notify path { stroke: #fff; fill: none; stroke-width: 1.300; }
.tray .solid { fill: #fff; stroke: none; }
.lang { width: 37px; }
.clock { width: 64px; display: flex; flex-direction: column; align-items: center; line-height: 18px; font-size: 11px; }
.notify { width: 18px; margin: 0 24px 0 12px; }
</style>
